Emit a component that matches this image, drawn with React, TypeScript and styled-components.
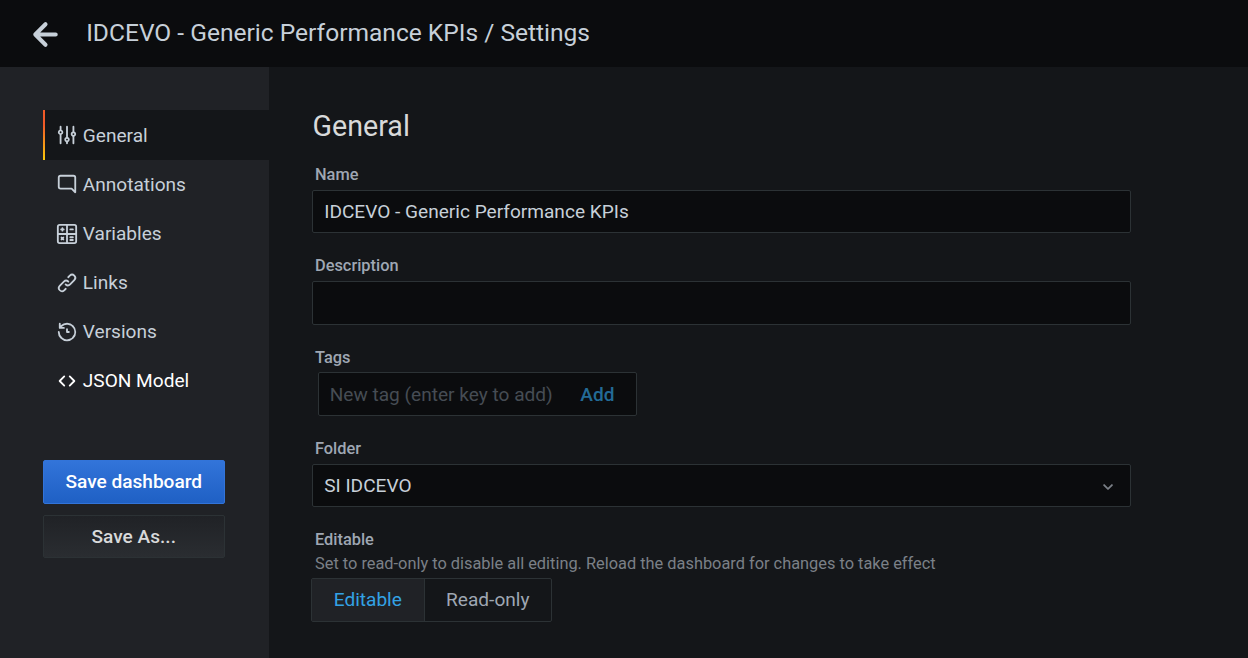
import React from "react";
import styled, { createGlobalStyle } from "styled-components";

const GlobalStyle = createGlobalStyle`
  *, *::before, *::after { box-sizing: border-box; }
  html, body { margin: 0; padding: 0; background: #141619; }
  body { font-family: Roboto, "Liberation Sans", sans-serif; font-size: 19.09px; color: #c7d0d9; overflow: hidden; }
  button, input { font: inherit; margin: 0; }
`;

const Page = styled.div`
  display: flex;
  flex-direction: column;
  height: 658px;
  background: #141619;
`;

const Header = styled.header`
  display: flex;
  align-items: center;
  flex: none;
  height: 67px;
  padding: 0 0 0 21px;
  background: #0b0c0e;
`;

const BackButton = styled.button`
  display: flex;
  padding: 0;
  margin-top: 2px;
  border: 0;
  background: none;
  color: #c7d0d9;
`;

const Title = styled.h1`
  margin: 0 0 1px 16.2px;
  font-size: 24.55px;
  font-weight: 400;
  line-height: 36px;
`;

const Body = styled.div`
  display: flex;
  flex: 1;
  min-height: 0;
`;

const Sidebar = styled.aside`
  width: 269px;
  flex: none;
  padding: 43px 0 0 43px;
  background: #202226;
`;

const NavItem = styled.a<{ $active?: boolean; $hover?: boolean }>`
  display: flex;
  align-items: center;
  gap: 4.8px;
  height: ${(p) => (p.$active ? "50px" : "49px")};
  padding-left: ${(p) => (p.$active ? "11px" : "13px")};
  line-height: ${(p) => (p.$active ? "29px" : "28px")};
  color: ${(p) => (p.$hover ? "#ffffff" : "#c7d0d9")};
  background: ${(p) => (p.$active ? "#141619" : "transparent")};
  ${(p) =>
    p.$active &&
    `
    border-left: 2px solid;
    border-image: linear-gradient(#f05a28 30%, #fbca0a 99%) 1;
  `}
`;

const Actions = styled.div`
  display: flex;
  flex-direction: column;
  gap: 11px;
  width: 182px;
  margin-top: 55px;
`;

const ActionButton = styled.button<{ $primary?: boolean }>`
  height: ${(p) => (p.$primary ? "44px" : "43px")};
  padding: ${(p) => (p.$primary ? "0 0.5px 1px 0" : "0 0.5px 0 0")};
  border: 1px solid ${(p) => (p.$primary ? "#3274d9" : "#2c3235")};
  border-radius: 2px;
  background: ${(p) =>
    p.$primary ? "linear-gradient(#3274d9, #1f60c4)" : "linear-gradient(#202226, #2a2d31)"};
  color: ${(p) => (p.$primary ? "#ffffff" : "#d8d9da")};
  font-weight: 500;
  line-height: 41px;
`;

const Content = styled.main`
  flex: 1;
  padding: 43px 0 0 43px;
`;

const Heading = styled.h3`
  margin: 0 0 18.7px;
  padding-left: 0.5px;
  font-size: 28.64px;
  font-weight: 400;
  line-height: 32px;
  color: #d8d9da;
`;

const Field = styled.div`
  display: flex;
  flex-direction: column;
  width: 819px;
  height: 91.36px;
`;

const Label = styled.label`
  padding: 0.2px 0 0 3px;
  height: 29px;
  font-size: 16.36px;
  font-weight: 500;
  line-height: 28px;
  color: #9fa7b3;
`;

const Input = styled.input`
  width: 100%;
  height: 43.64px;
  padding: 0 11.2px;
  border: 1px solid #2c3235;
  border-radius: 2px;
  background: #0b0c0e;
  color: #c7d0d9;
  outline: 0;
`;

const TagsBox = styled.div`
  display: flex;
  align-items: center;
  justify-content: space-between;
  width: 319px;
  height: 43.64px;
  margin-left: 6px;
  padding: 0 21.5px 0 10.7px;
  border: 1px solid #2c3235;
  border-radius: 2px;
  background: #0b0c0e;
`;

const TagInput = styled.input`
  width: 235px;
  padding: 0;
  border: 0;
  background: none;
  outline: 0;
  &::placeholder { color: #464c54; opacity: 1; }
`;

const AddButton = styled.button`
  padding: 0;
  border: 0;
  background: none;
  color: #236b97;
  font-weight: 500;
`;

const Select = styled.div`
  display: flex;
  align-items: center;
  justify-content: space-between;
  height: 43.64px;
  padding: 0 11px 0 11.2px;
  border: 1px solid #2c3235;
  border-radius: 2px;
  background: #0b0c0e;
`;

const Chevron = styled.span`
  display: flex;
  margin-top: 2px;
  color: #7b8087;
`;

const EditableLabel = styled(Label)`
  display: block;
  height: 25px;
`;

const Help = styled.p`
  margin: 0;
  padding-left: 3px;
  height: 27px;
  font-size: 16.36px;
  line-height: 25px;
  color: #7b8087;
`;

const RadioGroup = styled.div`
  display: flex;
  width: 241px;
  margin-left: -1px;
  height: 43.64px;
  border: 1px solid #2c3235;
  border-radius: 2px;
`;

const Radio = styled.button<{ $selected?: boolean }>`
  width: ${(p) => (p.$selected ? "113px" : "126px")};
  padding: 0 0.4px 0 0;
  border: 0;
  border-right: ${(p) => (p.$selected ? "1px solid #2c3235" : "0")};
  background: ${(p) => (p.$selected ? "#202226" : "transparent")};
  color: ${(p) => (p.$selected ? "#33a2e5" : "#9fa7b3")};
`;

const Svg = styled.svg<{ $raised?: boolean }>`
  display: block;
  flex: none;
  margin-bottom: ${(p) => (p.$raised ? "1.2px" : "0")};
  fill: currentColor;
`;

const icons = {
  back: "M17,11H9.41l3.3-3.29a1,1,0,1,0-1.42-1.42l-5,5a1,1,0,0,0-.21.33,1,1,0,0,0,0,.76,1,1,0,0,0,.21.33l5,5a1,1,0,0,0,1.42,0,1,1,0,0,0,0-1.42L9.41,13H17a1,1,0,0,0,0-2Z",
  down: "M17,9.17a1,1,0,0,0-1.41,0L12,12.71,8.46,9.17a1,1,0,0,0-1.41,0,1,1,0,0,0,0,1.42l4.24,4.24a1,1,0,0,0,1.42,0L17,10.59A1,1,0,0,0,17,9.17Z",
  sliders:
    "M20,8.18V3a1,1,0,0,0-2,0V8.18a3,3,0,0,0,0,5.64V21a1,1,0,0,0,2,0V13.82a3,3,0,0,0,0-5.64ZM19,12a1,1,0,1,1,1-1A1,1,0,0,1,19,12Zm-6,2.18V3a1,1,0,0,0-2,0V14.18a3,3,0,0,0,0,5.64V21a1,1,0,0,0,2,0V19.82a3,3,0,0,0,0-5.64ZM12,18a1,1,0,1,1,1-1A1,1,0,0,1,12,18ZM6,6.18V3A1,1,0,0,0,4,3V6.18a3,3,0,0,0,0,5.64V21a1,1,0,0,0,2,0V11.82A3,3,0,0,0,6,6.18ZM5,10A1,1,0,1,1,6,9,1,1,0,0,1,5,10Z",
  comment:
    "M19,2H5A3,3,0,0,0,2,5V15a3,3,0,0,0,3,3H16.59l3.7,3.71A1,1,0,0,0,21,22a.84.84,0,0,0,.38-.08A1,1,0,0,0,22,21V5A3,3,0,0,0,19,2Zm1,16.59-2.29-2.3A1,1,0,0,0,17,16H5a1,1,0,0,1-1-1V5A1,1,0,0,1,5,4H19a1,1,0,0,1,1,1Z",
  link: "M10,17.55,8.23,19.27a2.47,2.47,0,0,1-3.5-3.5l4.54-4.55a2.46,2.46,0,0,1,3.39-.09l.12.1a1,1,0,0,0,1.4-1.43A2.75,2.75,0,0,0,14,9.59a4.46,4.46,0,0,0-6.09.22L3.31,14.36a4.48,4.48,0,0,0,6.33,6.33L11.37,19A1,1,0,0,0,10,17.55ZM20.69,3.31a4.49,4.49,0,0,0-6.33,0L12.63,5A1,1,0,0,0,14,6.45l1.73-1.72a2.47,2.47,0,0,1,3.5,3.5l-4.54,4.55a2.46,2.46,0,0,1-3.39.09l-.12-.1a1,1,0,0,0-1.4,1.43,2.75,2.75,0,0,0,.23.21,4.47,4.47,0,0,0,6.09-.22l4.55-4.55A4.49,4.49,0,0,0,20.69,3.31Z",
  history:
    "M12,2A10,10,0,0,0,5.12,4.77V3a1,1,0,0,0-2,0V7.5a1,1,0,0,0,1,1H8.62a1,1,0,0,0,0-2H6.22A8,8,0,1,1,4,12a1,1,0,0,0-2,0A10,10,0,1,0,12,2Zm0,6a1,1,0,0,0-1,1v3a1,1,0,0,0,1,1h2a1,1,0,0,0,0-2H13V9A1,1,0,0,0,12,8Z",
};

const Icon = ({ path, size = 22, raised }: { path: string; size?: number; raised?: boolean }) => (
  <Svg $raised={raised} width={size} height={size} viewBox="0 0 24 24">
    <path d={path} />
  </Svg>
);

const CalculatorIcon = () => (
  <Svg width={22} height={22} viewBox="0 0 24 24">
    <g fill="none" stroke="currentColor" strokeWidth="2" strokeLinecap="round">
      <rect x="2" y="2" width="20" height="20" rx="2" />
      <path strokeLinecap="butt" d="M12 2V22M2 12H22" />
      <path
        strokeWidth="2"
        d="M7 5.6V8.4M5.6 7H8.4M15.6 7H18.4M6 15.9L8 17.9M8 15.9L6 17.9M15.6 15.5H18.4M15.6 18.5H18.4"
      />
    </g>
  </Svg>
);

const CodeIcon = () => (
  <Svg width={22} height={22} viewBox="0 0 24 24">
    <path
      fill="none"
      stroke="currentColor"
      strokeWidth="2"
      strokeLinecap="round"
      strokeLinejoin="round"
      d="M9 7L4 12L9 17M15 7L20 12L15 17"
    />
  </Svg>
);

const App = () => (
  <>
    <GlobalStyle />
    <Page>
      <Header>
        <BackButton aria-label="Back">
          <Icon path={icons.back} size={49} />
        </BackButton>
        <Title>IDCEVO - Generic Performance KPIs / Settings</Title>
      </Header>
      <Body>
        <Sidebar>
          <nav>
            <NavItem $active>
              <Icon path={icons.sliders} />
              General
            </NavItem>
            <NavItem>
              <Icon path={icons.comment} raised />
              Annotations
            </NavItem>
            <NavItem>
              <CalculatorIcon />
              Variables
            </NavItem>
            <NavItem>
              <Icon path={icons.link} />
              Links
            </NavItem>
            <NavItem>
              <Icon path={icons.history} />
              Versions
            </NavItem>
            <NavItem $hover>
              <CodeIcon />
              JSON Model
            </NavItem>
          </nav>
          <Actions>
            <ActionButton $primary>Save dashboard</ActionButton>
            <ActionButton>Save As...</ActionButton>
          </Actions>
        </Sidebar>
        <Content>
          <Heading>General</Heading>
          <Field>
            <Label>Name</Label>
            <Input defaultValue="IDCEVO - Generic Performance KPIs" />
          </Field>
          <Field>
            <Label>Description</Label>
            <Input />
          </Field>
          <Field>
            <Label>Tags</Label>
            <TagsBox>
              <TagInput placeholder="New tag (enter key to add)" />
              <AddButton>Add</AddButton>
            </TagsBox>
          </Field>
          <Field>
            <Label>Folder</Label>
            <Select>
              SI IDCEVO
              <Chevron>
                <Icon path={icons.down} />
              </Chevron>
            </Select>
          </Field>
          <EditableLabel>Editable</EditableLabel>
          <Help>Set to read-only to disable all editing. Reload the dashboard for changes to take effect</Help>
          <RadioGroup>
            <Radio $selected>Editable</Radio>
            <Radio>Read-only</Radio>
          </RadioGroup>
        </Content>
      </Body>
    </Page>
  </>
);

export default App;
